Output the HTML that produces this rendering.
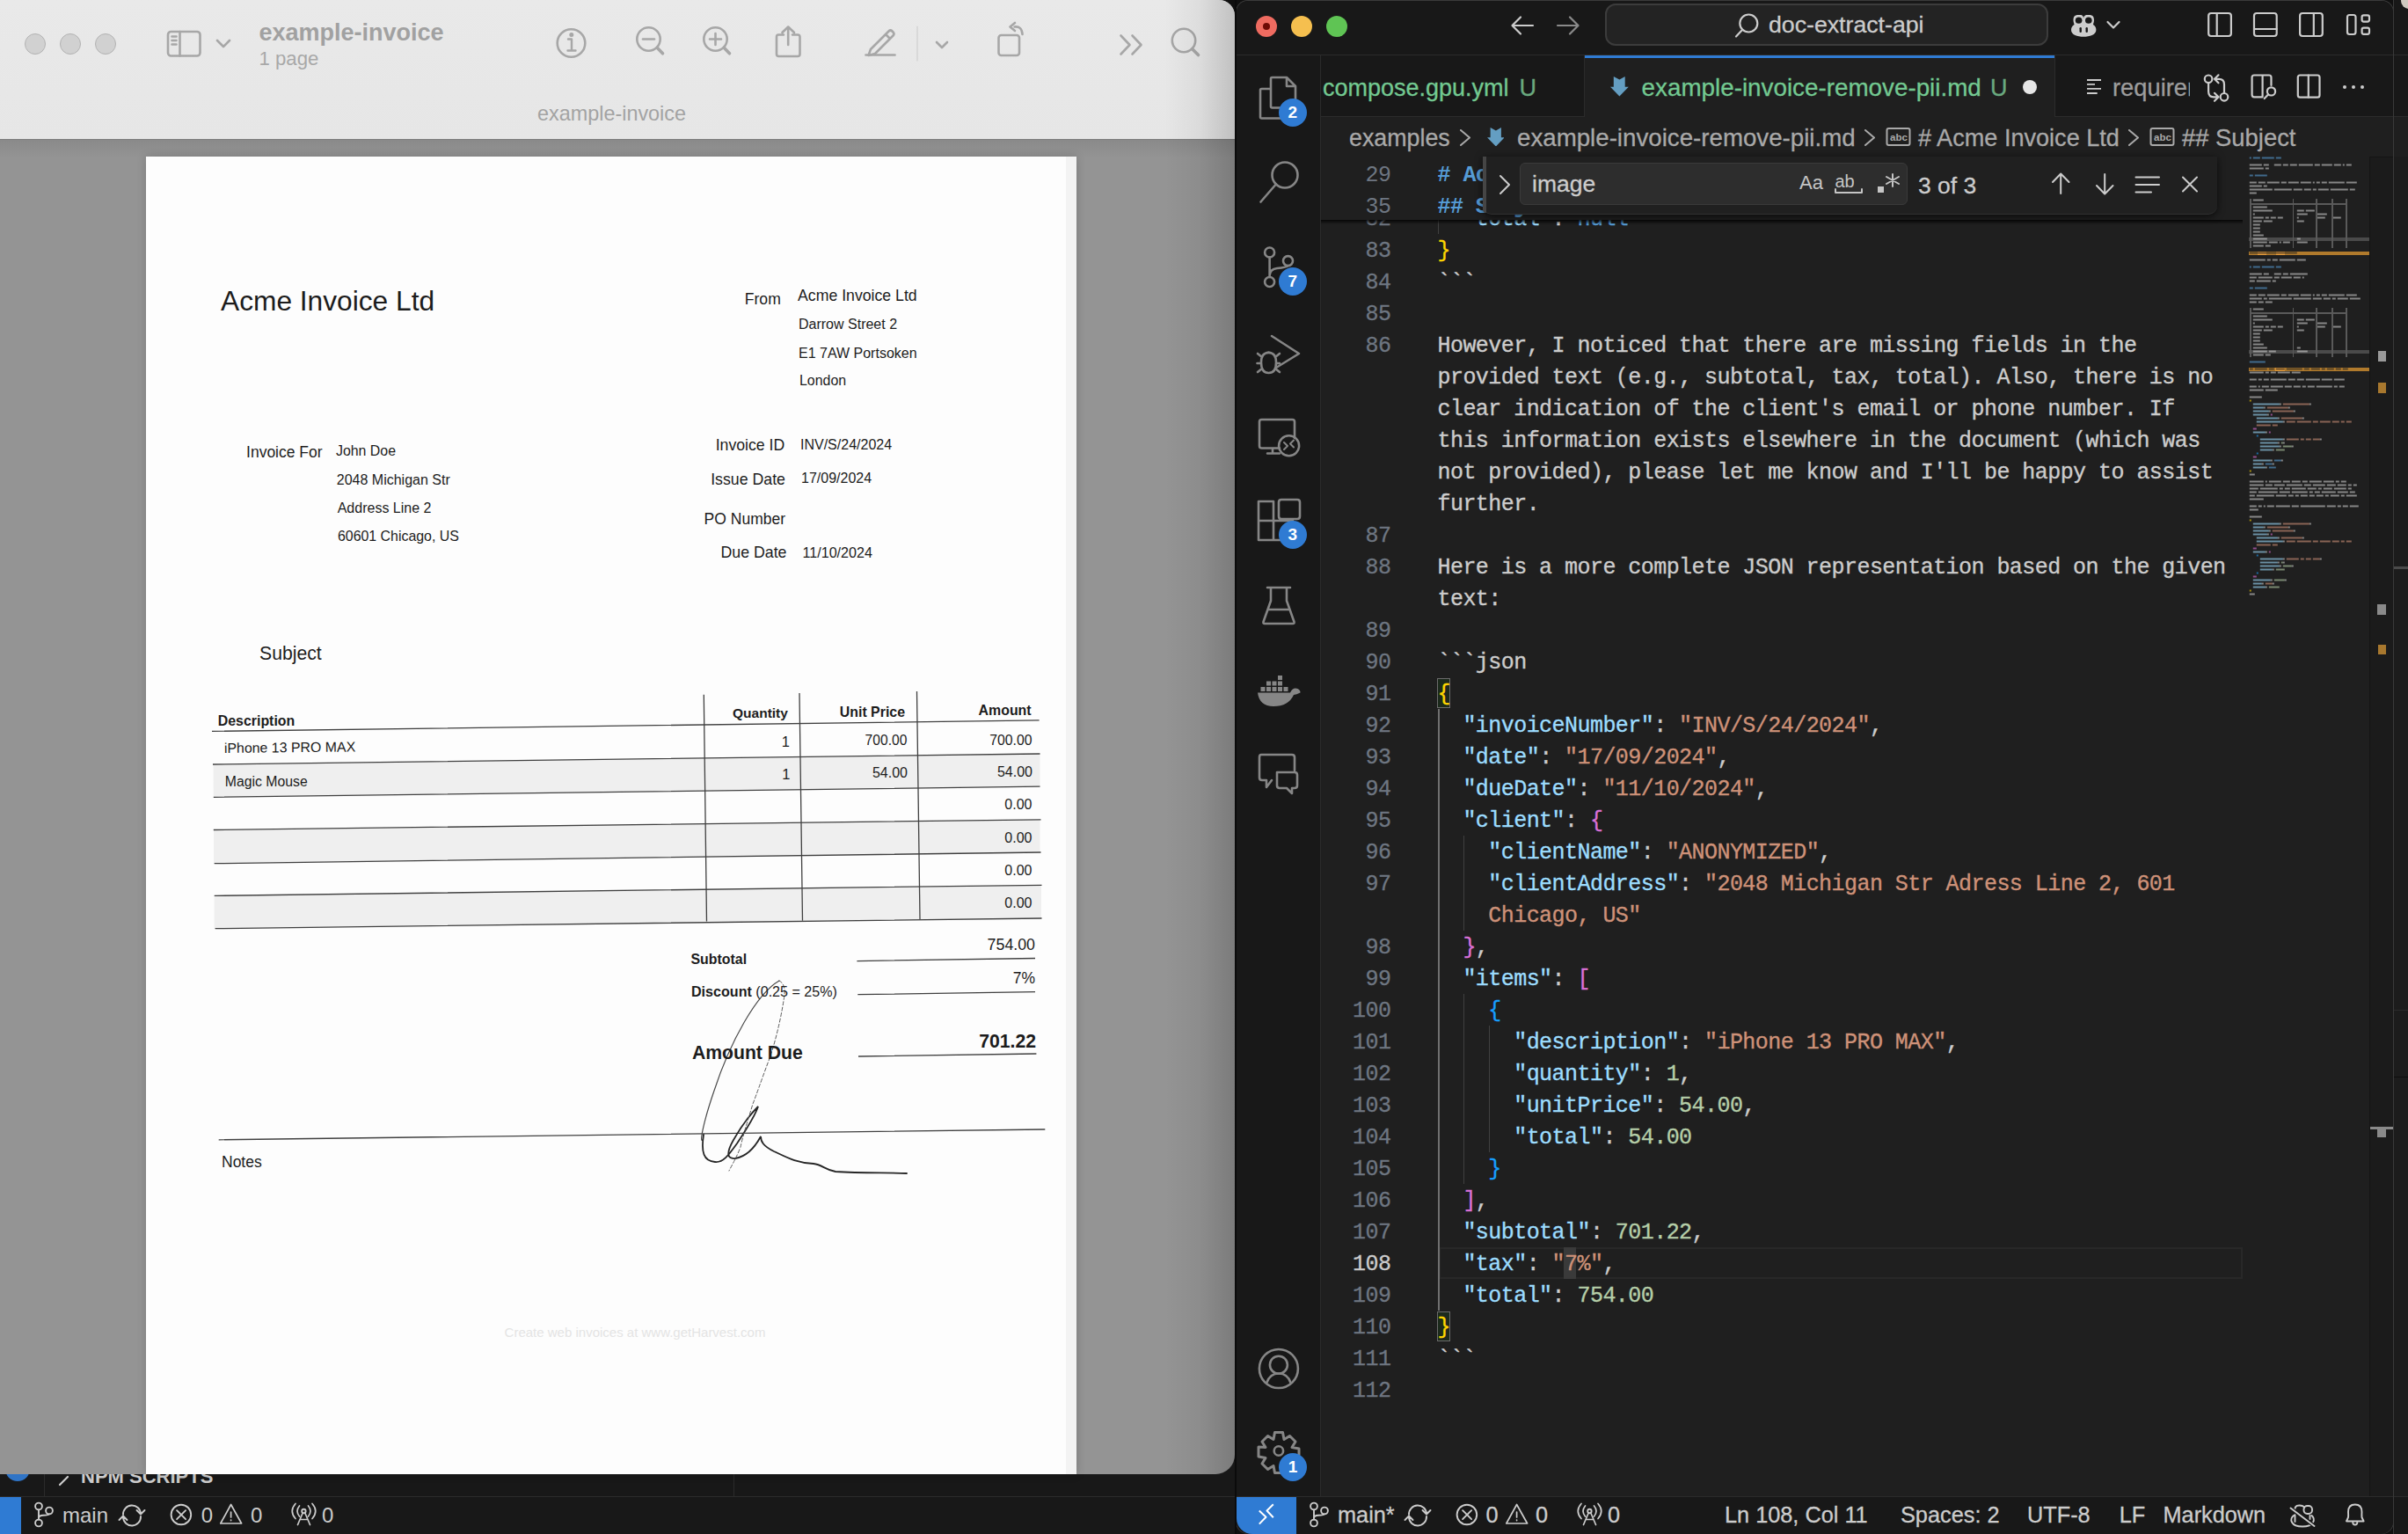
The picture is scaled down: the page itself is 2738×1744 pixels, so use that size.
<!DOCTYPE html><html><head><meta charset="utf-8"><style>html,body{margin:0;padding:0;width:2738px;height:1744px;overflow:hidden;background:#101010;position:relative}</style></head><body>
<div style="position:absolute;left:0px;top:1660px;width:1406px;height:84px;background:#181818;"></div>
<div style="position:absolute;left:0px;top:1701px;width:1406px;height:1px;background:#2b2b2b;"></div>
<div style="position:absolute;left:50px;top:1660px;width:1px;height:41px;background:#2b2b2b;"></div>
<div style="position:absolute;left:834px;top:1660px;width:1px;height:41px;background:#2b2b2b;"></div>
<div style="position:absolute;left:6px;top:1656px;width:28px;height:28px;border-radius:50%;background:#2f74c6"></div>
<div style="position:absolute;left:0px;top:1702px;width:24px;height:42px;background:#2f7bd3;"></div>
<div style="position:absolute;left:92.00px;top:1668.38px;font:700 22px/22px 'Liberation Sans', sans-serif;color:#cccccc;white-space:pre;">NPM SCRIPTS</div>
<svg style="position:absolute;left:0px;top:1660px" width="1406" height="84" viewBox="0 1660 1406 84" fill="none" stroke="#cccccc" stroke-width="1.9" stroke-linecap="round" stroke-linejoin="round"><path d="M68 1688 L77 1679" stroke-width="2.2"/><g transform="translate(-1450 0)"><circle cx="1494" cy="1712.5" r="3.9"/><circle cx="1494" cy="1731.5" r="3.9"/><circle cx="1506" cy="1717.5" r="3.9"/><path d="M1494 1716.4 V1727.6 M1494 1726 Q1494 1723 1499 1722.8 Q1505.5 1722.5 1506 1721.4"/></g><g transform="translate(-1462 0)"><path d="M1602 1722 A10 10 0 0 1 1622 1721 M1617.5 1717 L1622 1721.5 L1626.5 1717 M1622 1724 A10 10 0 0 1 1602 1725 M1597.5 1728 L1602 1723.5 L1606.5 1728"/><circle cx="1667.9" cy="1722" r="11.3"/><path d="M1663.1 1717.2 L1673.1 1727.2 M1673.1 1717.2 L1663.1 1727.2"/><path d="M1724.6 1710.5 L1736.6 1732 H1712.8 Z M1724.6 1719 V1725 M1724.6 1728 V1728.6" stroke-width="1.7"/><circle cx="1807.4" cy="1718" r="2.2"/><path d="M1806 1720.5 L1800.5 1733.5 M1809 1720.5 L1814.5 1733.5 M1803 1727.5 H1812 M1802.5 1712 Q1797.5 1718 1802.5 1724 M1812.5 1712 Q1817.5 1718 1812.5 1724 M1798 1709.5 Q1790.5 1718 1798 1726.5 M1817 1709.5 Q1824.5 1718 1817 1726.5" stroke-width="1.7"/></g></svg>
<div style="position:absolute;left:71.00px;top:1710.68px;font:400 24px/24px 'Liberation Sans', sans-serif;color:#cccccc;white-space:pre;">main</div>
<div style="position:absolute;left:228.70px;top:1710.68px;font:400 24px/24px 'Liberation Sans', sans-serif;color:#cccccc;white-space:pre;">0</div>
<div style="position:absolute;left:285.00px;top:1710.68px;font:400 24px/24px 'Liberation Sans', sans-serif;color:#cccccc;white-space:pre;">0</div>
<div style="position:absolute;left:366.00px;top:1710.68px;font:400 24px/24px 'Liberation Sans', sans-serif;color:#cccccc;white-space:pre;">0</div>
<div style="position:absolute;left:0;top:0;width:1404px;height:1676px;border-radius:0 18px 22px 0;overflow:hidden;background:#949494">
<div style="position:absolute;left:0;top:0;width:1404px;height:158px;background:linear-gradient(#e9e9e9,#e6e6e6)"></div>
<div style="position:absolute;left:0;top:158px;width:1404px;height:1px;background:#7d7d7d"></div>
<div style="position:absolute;left:0;top:159px;width:1404px;height:20px;background:linear-gradient(#8a8a8a,#949494)"></div>
</div>
<div style="position:absolute;left:28px;top:38px;width:22px;height:22px;border-radius:50%;background:#d1d1d1;border:1px solid #b3b3b3"></div>
<div style="position:absolute;left:68px;top:38px;width:22px;height:22px;border-radius:50%;background:#d1d1d1;border:1px solid #b3b3b3"></div>
<div style="position:absolute;left:108px;top:38px;width:22px;height:22px;border-radius:50%;background:#d1d1d1;border:1px solid #b3b3b3"></div>
<svg style="position:absolute;left:0;top:0" width="1404" height="158" fill="none" stroke="#a7a7a7" stroke-width="2.6" stroke-linecap="round" stroke-linejoin="round">
<rect x="191" y="36" width="36.5" height="27.5" rx="3.5"/>
<path d="M204.5 36 V63.5 M195.5 41.5 H200.5 M195.5 46 H200.5 M195.5 50.5 H200.5"/>
<path d="M247 46 L254 53 L261 46"/>
<circle cx="649.5" cy="49" r="15.8"/>
<path d="M646 44.5 H650 V57 M645.5 57.5 H654.5" stroke-width="2.4"/>
<circle cx="649.8" cy="39.5" r="1.2" fill="#a7a7a7"/>
<circle cx="737.5" cy="44.5" r="13.2"/><path d="M747.2 54.2 L753.5 60.8" stroke-width="3.6"/><path d="M731 44.5 H744"/>
<circle cx="813.5" cy="44.5" r="13.2"/><path d="M823.2 54.2 L829.5 60.8" stroke-width="3.6"/><path d="M807 44.5 H820 M813.5 38 V51"/>
<path d="M891 39.5 H885 Q883 39.5 883 42 V61.5 Q883 64 885.5 64 H907 Q909.5 64 909.5 61.5 V42 Q909.5 39.5 907 39.5 H901 M896.2 51 V31 M889.5 37 L896.2 30.5 L903 37"/>
<path d="M984.5 62.5 H1017.5"/>
<path d="M990 56 L1010.5 35.5 Q1012.5 33.5 1014.5 35.5 L1015.5 36.5 Q1017.5 38.5 1015.5 40.5 L995 61 L987.5 63 Z M1007 39 L1012 44"/>
<path d="M1043 30 V69" stroke="#cfcfcf" stroke-width="1.2"/>
<path d="M1065 48 L1071 54 L1077 48"/>
<rect x="1135.5" y="40" width="23.5" height="23" rx="3"/>
<path d="M1153.5 30.5 Q1162 29.5 1162.5 39 M1148.5 30.5 L1154 26 M1148.5 30.5 L1154 35"/>
<path d="M1274.5 40.5 L1284.5 51 L1274.5 61.5 M1287.5 40.5 L1297.5 51 L1287.5 61.5"/>
<circle cx="1346" cy="46" r="13.2"/><path d="M1355.7 55.7 L1362.5 62.5" stroke-width="3.6"/>
</svg>
<div style="position:absolute;left:294.50px;top:23.64px;font:700 27px/27px 'Liberation Sans', sans-serif;color:#a1a1a1;white-space:pre;">example-invoice</div>
<div style="position:absolute;left:294.50px;top:56.21px;font:400 22.2px/22.2px 'Liberation Sans', sans-serif;color:#a8a8a8;white-space:pre;">1 page</div>
<div style="position:absolute;left:695.50px;transform:translateX(-50%);top:118.19px;font:400 23.4px/23.4px 'Liberation Sans', sans-serif;color:#a3a3a3;white-space:pre;">example-invoice</div>
<div style="position:absolute;left:166px;top:178px;width:1058px;height:1498px;background:#fdfdfd;overflow:hidden;box-shadow:0 0 10px rgba(0,0,0,0.18)">
<div style="position:absolute;left:1046px;top:0;width:12px;height:1498px;background:#f3f3f3"></div>
</div>
<div style="position:absolute;left:251.00px;top:326.97px;font:400 31.7px/31.7px 'Liberation Sans', sans-serif;color:#1c1c1c;white-space:pre;">Acme Invoice Ltd</div>
<div style="position:absolute;right:1850.20px;top:331.70px;font:400 17.6px/17.6px 'Liberation Sans', sans-serif;color:#1c1c1c;white-space:pre;">From</div>
<div style="position:absolute;left:907.00px;top:328.42px;font:400 17.7px/17.7px 'Liberation Sans', sans-serif;color:#1c1c1c;white-space:pre;">Acme Invoice Ltd</div>
<div style="position:absolute;left:908.00px;top:361.26px;font:400 16.0px/16.0px 'Liberation Sans', sans-serif;color:#1c1c1c;white-space:pre;">Darrow Street 2</div>
<div style="position:absolute;left:908.00px;top:394.06px;font:400 16.0px/16.0px 'Liberation Sans', sans-serif;color:#1c1c1c;white-space:pre;">E1 7AW Portsoken</div>
<div style="position:absolute;left:909.00px;top:425.30px;font:400 15.95px/15.95px 'Liberation Sans', sans-serif;color:#1c1c1c;white-space:pre;">London</div>
<div style="position:absolute;right:2371.40px;top:505.79px;font:400 17.5px/17.5px 'Liberation Sans', sans-serif;color:#1c1c1c;white-space:pre;">Invoice For</div>
<div style="position:absolute;left:382.00px;top:504.94px;font:400 15.9px/15.9px 'Liberation Sans', sans-serif;color:#1c1c1c;white-space:pre;">John Doe</div>
<div style="position:absolute;left:382.80px;top:537.56px;font:400 16.0px/16.0px 'Liberation Sans', sans-serif;color:#1c1c1c;white-space:pre;">2048 Michigan Str</div>
<div style="position:absolute;left:383.70px;top:569.86px;font:400 16.0px/16.0px 'Liberation Sans', sans-serif;color:#1c1c1c;white-space:pre;">Address Line 2</div>
<div style="position:absolute;left:384.00px;top:602.24px;font:400 15.9px/15.9px 'Liberation Sans', sans-serif;color:#1c1c1c;white-space:pre;">60601 Chicago, US</div>
<div style="position:absolute;right:1845.70px;top:498.22px;font:400 17.7px/17.7px 'Liberation Sans', sans-serif;color:#1c1c1c;white-space:pre;">Invoice ID</div>
<div style="position:absolute;left:910.00px;top:497.96px;font:400 16.0px/16.0px 'Liberation Sans', sans-serif;color:#1c1c1c;white-space:pre;">INV/S/24/2024</div>
<div style="position:absolute;right:1845.00px;top:537.47px;font:400 17.75px/17.75px 'Liberation Sans', sans-serif;color:#1c1c1c;white-space:pre;">Issue Date</div>
<div style="position:absolute;left:911.00px;top:535.56px;font:400 16.0px/16.0px 'Liberation Sans', sans-serif;color:#1c1c1c;white-space:pre;">17/09/2024</div>
<div style="position:absolute;right:1845.00px;top:581.69px;font:400 17.5px/17.5px 'Liberation Sans', sans-serif;color:#1c1c1c;white-space:pre;">PO Number</div>
<div style="position:absolute;right:1843.50px;top:620.47px;font:400 17.75px/17.75px 'Liberation Sans', sans-serif;color:#1c1c1c;white-space:pre;">Due Date</div>
<div style="position:absolute;left:912.50px;top:619.87px;font:400 16.1px/16.1px 'Liberation Sans', sans-serif;color:#1c1c1c;white-space:pre;">11/10/2024</div>
<div style="position:absolute;left:295.00px;top:732.25px;font:400 21.2px/21.2px 'Liberation Sans', sans-serif;color:#1c1c1c;white-space:pre;">Subject</div>
<svg style="position:absolute;left:0;top:0" width="1404" height="1676">
<polygon points="242.5,869 1182.5,857 1182.5,894.2 242.8,906.3" fill="#efefef"/>
<polygon points="243,943.5 1182.5,931.9 1182.5,969 243,981.7" fill="#efefef"/>
<polygon points="243.7,1018.4 1184,1006.3 1184,1044 243.7,1055.7" fill="#efefef"/>
<g stroke="#404040" stroke-width="1.3" fill="none">
<path d="M241 831.4 L1181.6 818.9 M242 869 L1182.5 857 M242.8 906.3 L1182.5 894.2 M242.8 943.5 L1183.5 931.9 M243.7 981.7 L1183.5 969 M243.7 1018.4 L1184.5 1006.3 M244.6 1055.7 L1184.5 1044"/>
<path d="M800.3 789.7 L803.5 1047.6 M909 788 L912.5 1046.7 M1042.5 786 L1046 1045"/>
<path d="M974.4 1092.6 L1177 1089.5 M975.3 1130.7 L1177 1127.6 M976 1201 L1178.4 1198 M248.7 1295.8 L1188.3 1284"/>
</g>
<g fill="none" stroke-linecap="round">
<path d="M886 1115 C 860 1130, 830 1185, 812 1240 C 800 1275, 795 1300, 799 1296" stroke="#4a4a4a" stroke-width="1.2"/>
<path d="M800 1290 C 797 1310, 800 1320, 813 1321 C 822 1322, 828 1314, 838 1300 C 848 1285, 858 1270, 862 1258 C 858 1262, 846 1275, 834 1296 C 826 1310, 826 1318, 836 1317 C 848 1315, 858 1305, 865 1292 C 865 1298, 868 1303, 880 1309 C 895 1316, 905 1322, 925 1323 C 935 1324, 938 1330, 950 1332 C 980 1334, 1010 1333, 1031 1334" stroke="#262626" stroke-width="1.8"/>
<path d="M886 1115 C 890 1117, 893 1122, 892 1131 C 888 1160, 880 1190, 874 1206 C 865 1230, 860 1245, 856 1255 C 850 1275, 845 1290, 842 1304 C 838 1315, 832 1325, 829 1331" stroke="#5a5a5a" stroke-width="1" stroke-dasharray="4 2.5"/>
</g>
</svg>
<div style="position:absolute;left:247.80px;top:811.64px;font:700 15.9px/15.9px 'Liberation Sans', sans-serif;color:#1c1c1c;white-space:pre;">Description</div>
<div style="position:absolute;right:1842.10px;top:803.08px;font:700 15.5px/15.5px 'Liberation Sans', sans-serif;color:#1c1c1c;white-space:pre;">Quantity</div>
<div style="position:absolute;right:1709.00px;top:802.34px;font:700 15.9px/15.9px 'Liberation Sans', sans-serif;color:#1c1c1c;white-space:pre;">Unit Price</div>
<div style="position:absolute;right:1565.40px;top:800.34px;font:700 15.9px/15.9px 'Liberation Sans', sans-serif;color:#1c1c1c;white-space:pre;">Amount</div>
<div style="position:absolute;left:254.50px;top:843.04px;font:400 15.9px/15.9px 'Liberation Sans', sans-serif;color:#1c1c1c;white-space:pre;transform:rotate(-0.6deg);transform-origin:0 100%">iPhone 13 PRO MAX</div>
<div style="position:absolute;right:1840.00px;top:834.83px;font:400 16.5px/16.5px 'Liberation Sans', sans-serif;color:#1c1c1c;white-space:pre;">1</div>
<div style="position:absolute;right:1706.70px;top:834.39px;font:400 15.6px/15.6px 'Liberation Sans', sans-serif;color:#1c1c1c;white-space:pre;">700.00</div>
<div style="position:absolute;right:1564.50px;top:834.23px;font:400 15.8px/15.8px 'Liberation Sans', sans-serif;color:#1c1c1c;white-space:pre;">700.00</div>
<div style="position:absolute;left:255.80px;top:881.33px;font:400 15.8px/15.8px 'Liberation Sans', sans-serif;color:#1c1c1c;white-space:pre;">Magic Mouse</div>
<div style="position:absolute;right:1839.50px;top:871.83px;font:400 16.5px/16.5px 'Liberation Sans', sans-serif;color:#1c1c1c;white-space:pre;">1</div>
<div style="position:absolute;right:1706.00px;top:871.26px;font:400 16.0px/16.0px 'Liberation Sans', sans-serif;color:#1c1c1c;white-space:pre;">54.00</div>
<div style="position:absolute;right:1564.00px;top:869.86px;font:400 16.0px/16.0px 'Liberation Sans', sans-serif;color:#1c1c1c;white-space:pre;">54.00</div>
<div style="position:absolute;right:1564.50px;top:907.16px;font:400 16.0px/16.0px 'Liberation Sans', sans-serif;color:#1c1c1c;white-space:pre;">0.00</div>
<div style="position:absolute;right:1564.50px;top:944.76px;font:400 16.0px/16.0px 'Liberation Sans', sans-serif;color:#1c1c1c;white-space:pre;">0.00</div>
<div style="position:absolute;right:1564.50px;top:982.06px;font:400 16.0px/16.0px 'Liberation Sans', sans-serif;color:#1c1c1c;white-space:pre;">0.00</div>
<div style="position:absolute;right:1564.50px;top:1019.26px;font:400 16.0px/16.0px 'Liberation Sans', sans-serif;color:#1c1c1c;white-space:pre;">0.00</div>
<div style="position:absolute;right:1561.00px;top:1065.73px;font:400 17.8px/17.8px 'Liberation Sans', sans-serif;color:#1c1c1c;white-space:pre;">754.00</div>
<div style="position:absolute;left:785.50px;top:1083.24px;font:700 15.9px/15.9px 'Liberation Sans', sans-serif;color:#1c1c1c;white-space:pre;">Subtotal</div>
<div style="position:absolute;right:1561.00px;top:1104.29px;font:400 17.5px/17.5px 'Liberation Sans', sans-serif;color:#1c1c1c;white-space:pre;">7%</div>
<div style="position:absolute;left:786.00px;top:1118.87px;font:400 16.1px/16.1px 'Liberation Sans', sans-serif;color:#1c1c1c;white-space:pre;"><b>Discount</b> (0.25 = 25%)</div>
<div style="position:absolute;right:1560.00px;top:1172.85px;font:700 21.2px/21.2px 'Liberation Sans', sans-serif;color:#1c1c1c;white-space:pre;">701.22</div>
<div style="position:absolute;left:786.90px;top:1186.35px;font:700 21.2px/21.2px 'Liberation Sans', sans-serif;color:#1c1c1c;white-space:pre;">Amount Due</div>
<div style="position:absolute;left:252.00px;top:1312.79px;font:400 17.5px/17.5px 'Liberation Sans', sans-serif;color:#1c1c1c;white-space:pre;">Notes</div>
<div style="position:absolute;left:722.00px;transform:translateX(-50%);top:1507.10px;font:400 15px/15px 'Liberation Sans', sans-serif;color:#e4e4e4;white-space:pre;">Create web invoices at www.getHarvest.com</div>
<div style="position:absolute;left:1324px;top:0;width:80px;height:1676px;background:linear-gradient(90deg,rgba(0,0,0,0),rgba(0,0,0,0.05) 50%,rgba(0,0,0,0.17));border-radius:0 18px 22px 0"></div>
<div style="position:absolute;left:2721px;top:0px;width:17px;height:1744px;background:#181818;"></div>
<div style="position:absolute;left:2722px;top:133px;width:16px;height:45px;background:#1f1f1f;"></div>
<div style="position:absolute;left:2722px;top:178px;width:16px;height:1523px;background:#1c1c1c;"></div>
<div style="position:absolute;left:2721px;top:62px;width:17px;height:1px;background:#2b2b2b;"></div>
<div style="position:absolute;left:2721px;top:132px;width:17px;height:1px;background:#2b2b2b;"></div>
<div style="position:absolute;left:2721px;top:1701px;width:17px;height:1px;background:#2b2b2b;"></div>
<div style="position:absolute;left:2730px;top:-8px;width:18px;height:18px;border-radius:50%;background:#cfc9bf"></div>
<div style="position:absolute;left:2721px;top:644px;width:17px;height:3px;background:#4a4a4a;"></div>
<div style="position:absolute;left:2721px;top:1148px;width:17px;height:1px;background:#2a2a2a;"></div>
<div style="position:absolute;left:2721px;top:1224px;width:17px;height:1px;background:#0e0e0e;"></div>
<div style="position:absolute;left:1405px;top:0;width:1317px;height:1744px;border-radius:14px 14px 14px 14px;background:#1f1f1f;overflow:hidden;box-shadow:0 0 0 1px #3a3a3a inset">
</div>
<div style="position:absolute;left:1404px;top:0px;width:2px;height:1744px;background:#0b0b0b;"></div>
<div style="position:absolute;left:1406px;top:1px;width:1315px;height:61px;background:#181818;border-radius:13px 13px 0 0"></div>
<div style="position:absolute;left:1406px;top:62px;width:1315px;height:1px;background:#2b2b2b;"></div>
<div style="position:absolute;left:1406px;top:63px;width:95px;height:1638px;background:#181818;"></div>
<div style="position:absolute;left:1501px;top:63px;width:1px;height:1638px;background:#2b2b2b;"></div>
<div style="position:absolute;left:1502px;top:63px;width:1219px;height:70px;background:#181818;"></div>
<div style="position:absolute;left:1502px;top:132px;width:1219px;height:1px;background:#2b2b2b;"></div>
<div style="position:absolute;left:1801px;top:63px;width:1px;height:70px;background:#2b2b2b;"></div>
<div style="position:absolute;left:1802px;top:63px;width:534px;height:70px;background:#1f1f1f;"></div>
<div style="position:absolute;left:1802px;top:63px;width:534px;height:3px;background:#2f7bd3;"></div>
<div style="position:absolute;left:2336px;top:63px;width:1px;height:70px;background:#2b2b2b;"></div>
<div style="position:absolute;left:1406px;top:1701px;width:1315px;height:1px;background:#2b2b2b;"></div>
<div style="position:absolute;left:1406px;top:1702px;width:1315px;height:42px;background:#181818;border-radius:0 0 14px 14px"></div>
<div style="position:absolute;left:1406px;top:1702px;width:68px;height:42px;background:#2f7bd3;border-radius:0 0 0 18px"></div>
<div style="position:absolute;left:2721px;top:1702px;width:1px;height:42px;background:#3a3a3a;"></div>
<div style="position:absolute;left:2721px;top:0px;width:1px;height:1744px;background:#3a3a3a;"></div>
<div style="position:absolute;left:1428px;top:18px;width:24px;height:24px;border-radius:50%;background:#ee6b60"></div>
<div style="position:absolute;left:1468px;top:18px;width:24px;height:24px;border-radius:50%;background:#f5bf4f"></div>
<div style="position:absolute;left:1508px;top:18px;width:24px;height:24px;border-radius:50%;background:#5fc454"></div>
<div style="position:absolute;left:1436px;top:26px;width:8px;height:8px;border-radius:50%;background:#6e0b05"></div>
<div style="position:absolute;left:1825px;top:4px;width:500px;height:44px;border:2px solid #3c3c3c;border-radius:12px;background:#232323"></div>
<div style="position:absolute;left:2011.00px;top:14.60px;font:400 26.7px/26.7px 'Liberation Sans', sans-serif;color:#cccccc;white-space:pre;-webkit-text-stroke:0.3px currentColor;">doc-extract-api</div>
<svg style="position:absolute;left:1406px;top:0" width="1315" height="133" viewBox="1406 0 1315 133" fill="none" stroke="#cccccc" stroke-width="2.2" stroke-linecap="round" stroke-linejoin="round">
<path d="M1743 29 H1720 M1729 19.5 L1719.5 29 L1729 38.5"/>
<path d="M1771 29 H1794 M1785 19.5 L1794.5 29 L1785 38.5" stroke="#8a8a8a"/>
<circle cx="1988.3" cy="26.5" r="10"/><path d="M1981 34 L1974 41.5"/>
<rect x="2511.2" y="15" width="25.7" height="26" rx="3"/><path d="M2520.7 15 V41"/>
<rect x="2563" y="15" width="25.7" height="26" rx="3"/><path d="M2563 33 H2588.7"/>
<rect x="2615.1" y="15" width="25.7" height="26" rx="3"/><path d="M2630.8 15 V41"/>
<rect x="2669" y="17" width="9.5" height="22" rx="2.5"/><rect x="2685.6" y="17.4" width="8.4" height="7.2" rx="2"/><rect x="2685.6" y="31.6" width="8.4" height="7.2" rx="2"/>
<path d="M2396.5 25 L2403 31.5 L2409.5 25"/>
<g fill="#cccccc" stroke="none">
<path d="M2369 21 C2369 16.5 2366 17 2363 17 C2359 17 2357.5 19 2357.5 23 C2357.5 25.5 2358.5 26.5 2358.5 28 C2356 29.5 2355 31.5 2355 34 C2355 39.5 2362 41.8 2369 41.8 C2376 41.8 2383.4 39.5 2383.4 34 C2383.4 31.5 2382.5 29.5 2380 28 C2380 26.5 2381 25.5 2381 23 C2381 19 2379.5 17 2375.5 17 C2372.5 17 2369.5 16.5 2369 21 Z"/>
</g>
<g fill="#181818" stroke="none">
<ellipse cx="2363.6" cy="23.2" rx="3.8" ry="3.6"/><ellipse cx="2374.8" cy="23.2" rx="3.8" ry="3.6"/>
<rect x="2364.5" y="31" width="2.4" height="6" rx="1.2"/><rect x="2371.5" y="31" width="2.4" height="6" rx="1.2"/>
</g>
</svg>
<div style="position:absolute;left:1504.00px;top:87.14px;font:400 27.0px/27.0px 'Liberation Sans', sans-serif;color:#73c991;white-space:pre;-webkit-text-stroke:0.3px currentColor;">compose.gpu.yml</div>
<div style="position:absolute;left:1727.60px;top:87.14px;font:400 27px/27px 'Liberation Sans', sans-serif;color:#6aa97f;white-space:pre;-webkit-text-stroke:0.3px currentColor;">U</div>
<div style="position:absolute;left:1866.60px;top:86.47px;font:400 27.8px/27.8px 'Liberation Sans', sans-serif;color:#73c991;white-space:pre;-webkit-text-stroke:0.3px currentColor;">example-invoice-remove-pii.md</div>
<div style="position:absolute;left:2263.00px;top:87.14px;font:400 27px/27px 'Liberation Sans', sans-serif;color:#6aa97f;white-space:pre;-webkit-text-stroke:0.3px currentColor;">U</div>
<div style="position:absolute;left:2300px;top:91px;width:16px;height:16px;border-radius:50%;background:#e6e6e6"></div>
<div style="position:absolute;left:2337px;top:63px;width:160px;height:69px;overflow:hidden">
<div style="position:absolute;left:65.00px;top:22.89px;font:400 27.3px/27.3px 'Liberation Sans', sans-serif;color:#9d9d9d;white-space:pre;-webkit-text-stroke:0.3px currentColor;">requirements.txt</div>
</div>
<div style="position:absolute;left:2490px;top:63px;width:231px;height:69px;background:#181818"></div>
<svg style="position:absolute;left:1406px;top:0" width="1315" height="180" viewBox="1406 0 1315 180" fill="none" stroke="#cccccc" stroke-width="2.2" stroke-linecap="round" stroke-linejoin="round">
<path d="M2373 91 H2389 M2373 95.8 H2382 M2373 100.8 H2389 M2373 106 H2384.7" stroke-width="1.8" stroke-linecap="butt"/>
<circle cx="2511.1" cy="89.8" r="4.3"/><circle cx="2529" cy="110.3" r="4.3"/>
<path d="M2511.1 94.3 V104 Q2511.1 110.3 2517 110.3 H2522 M2518 105.8 L2522.5 110.3 L2518 114.8"/>
<path d="M2529 105.8 V96 Q2529 89.8 2523 89.8 H2518.5 M2522.5 85.3 L2518 89.8 L2522.5 94.3"/>
<path d="M2582.5 97 V88 Q2582.5 85.5 2580 85.5 H2563 Q2560.6 85.5 2560.6 88 V107.8 Q2560.6 110.3 2563 110.3 H2572.6 M2572.6 85.5 V110.3"/>
<circle cx="2582.5" cy="103.9" r="4.6"/><path d="M2579.2 107.2 L2574.7 112"/>
<rect x="2612.8" y="85.5" width="24.7" height="25.2" rx="2.5"/><path d="M2624.8 85.5 V110.7"/>
</svg>
<div style="position:absolute;left:2663.5px;top:96.7px;width:4.6px;height:4.6px;border-radius:50%;background:#cccccc"></div>
<div style="position:absolute;left:2673.7px;top:96.7px;width:4.6px;height:4.6px;border-radius:50%;background:#cccccc"></div>
<div style="position:absolute;left:2683.8999999999996px;top:96.7px;width:4.6px;height:4.6px;border-radius:50%;background:#cccccc"></div>
<svg style="position:absolute;left:1831.2px;top:87.2px" width="20.8" height="22.6" viewBox="0 0 20.8 22.6"><path d="M3.8 0 L10.4 3.6 L16.7 0 V11.8 H20.8 L10.4 22.6 L0 11.8 H3.8 Z" fill="#649ec2"/></svg>
<svg style="position:absolute;left:1690.7px;top:144.5px" width="19.8" height="21.5" viewBox="0 0 20.8 22.6"><path d="M3.8 0 L10.4 3.6 L16.7 0 V11.8 H20.8 L10.4 22.6 L0 11.8 H3.8 Z" fill="#649ec2"/></svg>
<div style="position:absolute;left:1534.00px;top:143.61px;font:400 26.8px/26.8px 'Liberation Sans', sans-serif;color:#a9a9a9;white-space:pre;-webkit-text-stroke:0.3px currentColor;">examples</div>
<div style="position:absolute;left:1725.00px;top:142.85px;font:400 27.7px/27.7px 'Liberation Sans', sans-serif;color:#a9a9a9;white-space:pre;-webkit-text-stroke:0.3px currentColor;">example-invoice-remove-pii.md</div>
<div style="position:absolute;left:2181.00px;top:143.36px;font:400 27.1px/27.1px 'Liberation Sans', sans-serif;color:#a9a9a9;white-space:pre;-webkit-text-stroke:0.3px currentColor;"># Acme Invoice Ltd</div>
<div style="position:absolute;left:2481.00px;top:143.11px;font:400 27.4px/27.4px 'Liberation Sans', sans-serif;color:#a9a9a9;white-space:pre;-webkit-text-stroke:0.3px currentColor;">## Subject</div>
<svg style="position:absolute;left:1406px;top:133px" width="1315" height="44" viewBox="1406 133 1315 44" fill="none" stroke="#a9a9a9" stroke-width="2" stroke-linecap="round" stroke-linejoin="round">
<path d="M1661 148 L1671 156.5 L1661 165 M2121 148 L2131 156.5 L2121 165 M2421 148 L2431 156.5 L2421 165"/>
<rect x="2145.5" y="146" width="26" height="19" rx="2"/><rect x="2445.5" y="146" width="26" height="19" rx="2"/>
</svg>
<div style="position:absolute;left:2149.00px;top:150.77px;font:700 11.5px/11.5px 'Liberation Sans', sans-serif;color:#a9a9a9;white-space:pre;">abc</div>
<div style="position:absolute;left:2449.00px;top:150.77px;font:700 11.5px/11.5px 'Liberation Sans', sans-serif;color:#a9a9a9;white-space:pre;">abc</div>
<div style="position:absolute;left:1502px;top:178px;width:1219px;height:1523px;background:#1f1f1f;"></div>
<div style="position:absolute;left:2694px;top:178px;width:27px;height:1523px;background:#1b1b1b;"></div>
<div style="position:absolute;left:2694px;top:178px;width:1px;height:1523px;background:#141414;"></div>
<div style="position:absolute;left:2694px;top:178px;width:27px;height:1px;background:#141414;"></div>
<div style="position:absolute;left:1636px;top:1418px;width:910px;height:32px;border:2px solid #282828"></div>
<div style="position:absolute;left:1778px;top:1418px;width:14px;height:36px;background:#3a3a3a;"></div>
<div style="position:absolute;left:1634.5px;top:806.0px;width:2px;height:684px;background:#6f6f6f;"></div>
<div style="position:absolute;left:1663.6px;top:950.0px;width:1.5px;height:108px;background:#404040;"></div>
<div style="position:absolute;left:1663.6px;top:1130.0px;width:1.5px;height:216px;background:#404040;"></div>
<div style="position:absolute;left:1692.5px;top:1166.0px;width:1.5px;height:144px;background:#404040;"></div>
<div style="position:absolute;left:1634.5px;top:230.0px;width:1.5px;height:36px;background:#404040;"></div>
<div style="position:absolute;left:1634px;top:771.0px;width:13px;height:32px;border:1.5px solid #6b6b6b;background:#1c2a1c"></div>
<div style="position:absolute;left:1634px;top:1491.0px;width:13px;height:32px;border:1.5px solid #6b6b6b;background:#1c2a1c"></div>
<div style="position:absolute;left:1634.5px;top:237.04px;font:400 25px/25px 'Liberation Mono', monospace;letter-spacing:-0.550px;white-space:pre;-webkit-text-stroke:0.35px currentColor"><span style="color:#cccccc">  </span><span style="color:#9cdcfe">"total"</span><span style="color:#cccccc">: </span><span style="color:#569cd6">null</span></div>
<div style="position:absolute;right:1156.55px;top:237.04px;font:400 25px/25px 'Liberation Mono', monospace;letter-spacing:-0.550px;color:#6e7681;white-space:pre;-webkit-text-stroke:0.3px currentColor">82</div>
<div style="position:absolute;left:1634.5px;top:273.04px;font:400 25px/25px 'Liberation Mono', monospace;letter-spacing:-0.550px;white-space:pre;-webkit-text-stroke:0.35px currentColor"><span style="color:#ffd700">}</span></div>
<div style="position:absolute;right:1156.55px;top:273.04px;font:400 25px/25px 'Liberation Mono', monospace;letter-spacing:-0.550px;color:#6e7681;white-space:pre;-webkit-text-stroke:0.3px currentColor">83</div>
<div style="position:absolute;left:1634.5px;top:309.04px;font:400 25px/25px 'Liberation Mono', monospace;letter-spacing:-0.550px;white-space:pre;-webkit-text-stroke:0.35px currentColor"><span style="color:#cccccc">```</span></div>
<div style="position:absolute;right:1156.55px;top:309.04px;font:400 25px/25px 'Liberation Mono', monospace;letter-spacing:-0.550px;color:#6e7681;white-space:pre;-webkit-text-stroke:0.3px currentColor">84</div>
<div style="position:absolute;right:1156.55px;top:345.04px;font:400 25px/25px 'Liberation Mono', monospace;letter-spacing:-0.550px;color:#6e7681;white-space:pre;-webkit-text-stroke:0.3px currentColor">85</div>
<div style="position:absolute;left:1634.5px;top:381.04px;font:400 25px/25px 'Liberation Mono', monospace;letter-spacing:-0.550px;white-space:pre;-webkit-text-stroke:0.35px currentColor"><span style="color:#cccccc">However, I noticed that there are missing fields in the</span></div>
<div style="position:absolute;right:1156.55px;top:381.04px;font:400 25px/25px 'Liberation Mono', monospace;letter-spacing:-0.550px;color:#6e7681;white-space:pre;-webkit-text-stroke:0.3px currentColor">86</div>
<div style="position:absolute;left:1634.5px;top:417.04px;font:400 25px/25px 'Liberation Mono', monospace;letter-spacing:-0.550px;white-space:pre;-webkit-text-stroke:0.35px currentColor"><span style="color:#cccccc">provided text (e.g., subtotal, tax, total). Also, there is no</span></div>
<div style="position:absolute;left:1634.5px;top:453.04px;font:400 25px/25px 'Liberation Mono', monospace;letter-spacing:-0.550px;white-space:pre;-webkit-text-stroke:0.35px currentColor"><span style="color:#cccccc">clear indication of the client's email or phone number. If</span></div>
<div style="position:absolute;left:1634.5px;top:489.04px;font:400 25px/25px 'Liberation Mono', monospace;letter-spacing:-0.550px;white-space:pre;-webkit-text-stroke:0.35px currentColor"><span style="color:#cccccc">this information exists elsewhere in the document (which was</span></div>
<div style="position:absolute;left:1634.5px;top:525.04px;font:400 25px/25px 'Liberation Mono', monospace;letter-spacing:-0.550px;white-space:pre;-webkit-text-stroke:0.35px currentColor"><span style="color:#cccccc">not provided), please let me know and I'll be happy to assist</span></div>
<div style="position:absolute;left:1634.5px;top:561.04px;font:400 25px/25px 'Liberation Mono', monospace;letter-spacing:-0.550px;white-space:pre;-webkit-text-stroke:0.35px currentColor"><span style="color:#cccccc">further.</span></div>
<div style="position:absolute;right:1156.55px;top:597.04px;font:400 25px/25px 'Liberation Mono', monospace;letter-spacing:-0.550px;color:#6e7681;white-space:pre;-webkit-text-stroke:0.3px currentColor">87</div>
<div style="position:absolute;left:1634.5px;top:633.04px;font:400 25px/25px 'Liberation Mono', monospace;letter-spacing:-0.550px;white-space:pre;-webkit-text-stroke:0.35px currentColor"><span style="color:#cccccc">Here is a more complete JSON representation based on the given</span></div>
<div style="position:absolute;right:1156.55px;top:633.04px;font:400 25px/25px 'Liberation Mono', monospace;letter-spacing:-0.550px;color:#6e7681;white-space:pre;-webkit-text-stroke:0.3px currentColor">88</div>
<div style="position:absolute;left:1634.5px;top:669.04px;font:400 25px/25px 'Liberation Mono', monospace;letter-spacing:-0.550px;white-space:pre;-webkit-text-stroke:0.35px currentColor"><span style="color:#cccccc">text:</span></div>
<div style="position:absolute;right:1156.55px;top:705.04px;font:400 25px/25px 'Liberation Mono', monospace;letter-spacing:-0.550px;color:#6e7681;white-space:pre;-webkit-text-stroke:0.3px currentColor">89</div>
<div style="position:absolute;left:1634.5px;top:741.04px;font:400 25px/25px 'Liberation Mono', monospace;letter-spacing:-0.550px;white-space:pre;-webkit-text-stroke:0.35px currentColor"><span style="color:#cccccc">```json</span></div>
<div style="position:absolute;right:1156.55px;top:741.04px;font:400 25px/25px 'Liberation Mono', monospace;letter-spacing:-0.550px;color:#6e7681;white-space:pre;-webkit-text-stroke:0.3px currentColor">90</div>
<div style="position:absolute;left:1634.5px;top:777.04px;font:400 25px/25px 'Liberation Mono', monospace;letter-spacing:-0.550px;white-space:pre;-webkit-text-stroke:0.35px currentColor"><span style="color:#ffd700">{</span></div>
<div style="position:absolute;right:1156.55px;top:777.04px;font:400 25px/25px 'Liberation Mono', monospace;letter-spacing:-0.550px;color:#6e7681;white-space:pre;-webkit-text-stroke:0.3px currentColor">91</div>
<div style="position:absolute;left:1634.5px;top:813.04px;font:400 25px/25px 'Liberation Mono', monospace;letter-spacing:-0.550px;white-space:pre;-webkit-text-stroke:0.35px currentColor"><span style="color:#cccccc">  </span><span style="color:#9cdcfe">"invoiceNumber"</span><span style="color:#cccccc">: </span><span style="color:#ce9178">"INV/S/24/2024"</span><span style="color:#cccccc">,</span></div>
<div style="position:absolute;right:1156.55px;top:813.04px;font:400 25px/25px 'Liberation Mono', monospace;letter-spacing:-0.550px;color:#6e7681;white-space:pre;-webkit-text-stroke:0.3px currentColor">92</div>
<div style="position:absolute;left:1634.5px;top:849.04px;font:400 25px/25px 'Liberation Mono', monospace;letter-spacing:-0.550px;white-space:pre;-webkit-text-stroke:0.35px currentColor"><span style="color:#cccccc">  </span><span style="color:#9cdcfe">"date"</span><span style="color:#cccccc">: </span><span style="color:#ce9178">"17/09/2024"</span><span style="color:#cccccc">,</span></div>
<div style="position:absolute;right:1156.55px;top:849.04px;font:400 25px/25px 'Liberation Mono', monospace;letter-spacing:-0.550px;color:#6e7681;white-space:pre;-webkit-text-stroke:0.3px currentColor">93</div>
<div style="position:absolute;left:1634.5px;top:885.04px;font:400 25px/25px 'Liberation Mono', monospace;letter-spacing:-0.550px;white-space:pre;-webkit-text-stroke:0.35px currentColor"><span style="color:#cccccc">  </span><span style="color:#9cdcfe">"dueDate"</span><span style="color:#cccccc">: </span><span style="color:#ce9178">"11/10/2024"</span><span style="color:#cccccc">,</span></div>
<div style="position:absolute;right:1156.55px;top:885.04px;font:400 25px/25px 'Liberation Mono', monospace;letter-spacing:-0.550px;color:#6e7681;white-space:pre;-webkit-text-stroke:0.3px currentColor">94</div>
<div style="position:absolute;left:1634.5px;top:921.04px;font:400 25px/25px 'Liberation Mono', monospace;letter-spacing:-0.550px;white-space:pre;-webkit-text-stroke:0.35px currentColor"><span style="color:#cccccc">  </span><span style="color:#9cdcfe">"client"</span><span style="color:#cccccc">: </span><span style="color:#da70d6">{</span></div>
<div style="position:absolute;right:1156.55px;top:921.04px;font:400 25px/25px 'Liberation Mono', monospace;letter-spacing:-0.550px;color:#6e7681;white-space:pre;-webkit-text-stroke:0.3px currentColor">95</div>
<div style="position:absolute;left:1634.5px;top:957.04px;font:400 25px/25px 'Liberation Mono', monospace;letter-spacing:-0.550px;white-space:pre;-webkit-text-stroke:0.35px currentColor"><span style="color:#cccccc">    </span><span style="color:#9cdcfe">"clientName"</span><span style="color:#cccccc">: </span><span style="color:#ce9178">"ANONYMIZED"</span><span style="color:#cccccc">,</span></div>
<div style="position:absolute;right:1156.55px;top:957.04px;font:400 25px/25px 'Liberation Mono', monospace;letter-spacing:-0.550px;color:#6e7681;white-space:pre;-webkit-text-stroke:0.3px currentColor">96</div>
<div style="position:absolute;left:1634.5px;top:993.04px;font:400 25px/25px 'Liberation Mono', monospace;letter-spacing:-0.550px;white-space:pre;-webkit-text-stroke:0.35px currentColor"><span style="color:#cccccc">    </span><span style="color:#9cdcfe">"clientAddress"</span><span style="color:#cccccc">: </span><span style="color:#ce9178">"2048 Michigan Str Adress Line 2, 601</span></div>
<div style="position:absolute;right:1156.55px;top:993.04px;font:400 25px/25px 'Liberation Mono', monospace;letter-spacing:-0.550px;color:#6e7681;white-space:pre;-webkit-text-stroke:0.3px currentColor">97</div>
<div style="position:absolute;left:1634.5px;top:1029.04px;font:400 25px/25px 'Liberation Mono', monospace;letter-spacing:-0.550px;white-space:pre;-webkit-text-stroke:0.35px currentColor"><span style="color:#cccccc">    </span><span style="color:#ce9178">Chicago, US"</span></div>
<div style="position:absolute;left:1634.5px;top:1065.04px;font:400 25px/25px 'Liberation Mono', monospace;letter-spacing:-0.550px;white-space:pre;-webkit-text-stroke:0.35px currentColor"><span style="color:#cccccc">  </span><span style="color:#da70d6">}</span><span style="color:#cccccc">,</span></div>
<div style="position:absolute;right:1156.55px;top:1065.04px;font:400 25px/25px 'Liberation Mono', monospace;letter-spacing:-0.550px;color:#6e7681;white-space:pre;-webkit-text-stroke:0.3px currentColor">98</div>
<div style="position:absolute;left:1634.5px;top:1101.04px;font:400 25px/25px 'Liberation Mono', monospace;letter-spacing:-0.550px;white-space:pre;-webkit-text-stroke:0.35px currentColor"><span style="color:#cccccc">  </span><span style="color:#9cdcfe">"items"</span><span style="color:#cccccc">: </span><span style="color:#da70d6">[</span></div>
<div style="position:absolute;right:1156.55px;top:1101.04px;font:400 25px/25px 'Liberation Mono', monospace;letter-spacing:-0.550px;color:#6e7681;white-space:pre;-webkit-text-stroke:0.3px currentColor">99</div>
<div style="position:absolute;left:1634.5px;top:1137.04px;font:400 25px/25px 'Liberation Mono', monospace;letter-spacing:-0.550px;white-space:pre;-webkit-text-stroke:0.35px currentColor"><span style="color:#cccccc">    </span><span style="color:#179fff">{</span></div>
<div style="position:absolute;right:1156.55px;top:1137.04px;font:400 25px/25px 'Liberation Mono', monospace;letter-spacing:-0.550px;color:#6e7681;white-space:pre;-webkit-text-stroke:0.3px currentColor">100</div>
<div style="position:absolute;left:1634.5px;top:1173.04px;font:400 25px/25px 'Liberation Mono', monospace;letter-spacing:-0.550px;white-space:pre;-webkit-text-stroke:0.35px currentColor"><span style="color:#cccccc">      </span><span style="color:#9cdcfe">"description"</span><span style="color:#cccccc">: </span><span style="color:#ce9178">"iPhone 13 PRO MAX"</span><span style="color:#cccccc">,</span></div>
<div style="position:absolute;right:1156.55px;top:1173.04px;font:400 25px/25px 'Liberation Mono', monospace;letter-spacing:-0.550px;color:#6e7681;white-space:pre;-webkit-text-stroke:0.3px currentColor">101</div>
<div style="position:absolute;left:1634.5px;top:1209.04px;font:400 25px/25px 'Liberation Mono', monospace;letter-spacing:-0.550px;white-space:pre;-webkit-text-stroke:0.35px currentColor"><span style="color:#cccccc">      </span><span style="color:#9cdcfe">"quantity"</span><span style="color:#cccccc">: </span><span style="color:#b5cea8">1</span><span style="color:#cccccc">,</span></div>
<div style="position:absolute;right:1156.55px;top:1209.04px;font:400 25px/25px 'Liberation Mono', monospace;letter-spacing:-0.550px;color:#6e7681;white-space:pre;-webkit-text-stroke:0.3px currentColor">102</div>
<div style="position:absolute;left:1634.5px;top:1245.04px;font:400 25px/25px 'Liberation Mono', monospace;letter-spacing:-0.550px;white-space:pre;-webkit-text-stroke:0.35px currentColor"><span style="color:#cccccc">      </span><span style="color:#9cdcfe">"unitPrice"</span><span style="color:#cccccc">: </span><span style="color:#b5cea8">54.00</span><span style="color:#cccccc">,</span></div>
<div style="position:absolute;right:1156.55px;top:1245.04px;font:400 25px/25px 'Liberation Mono', monospace;letter-spacing:-0.550px;color:#6e7681;white-space:pre;-webkit-text-stroke:0.3px currentColor">103</div>
<div style="position:absolute;left:1634.5px;top:1281.04px;font:400 25px/25px 'Liberation Mono', monospace;letter-spacing:-0.550px;white-space:pre;-webkit-text-stroke:0.35px currentColor"><span style="color:#cccccc">      </span><span style="color:#9cdcfe">"total"</span><span style="color:#cccccc">: </span><span style="color:#b5cea8">54.00</span></div>
<div style="position:absolute;right:1156.55px;top:1281.04px;font:400 25px/25px 'Liberation Mono', monospace;letter-spacing:-0.550px;color:#6e7681;white-space:pre;-webkit-text-stroke:0.3px currentColor">104</div>
<div style="position:absolute;left:1634.5px;top:1317.04px;font:400 25px/25px 'Liberation Mono', monospace;letter-spacing:-0.550px;white-space:pre;-webkit-text-stroke:0.35px currentColor"><span style="color:#cccccc">    </span><span style="color:#179fff">}</span></div>
<div style="position:absolute;right:1156.55px;top:1317.04px;font:400 25px/25px 'Liberation Mono', monospace;letter-spacing:-0.550px;color:#6e7681;white-space:pre;-webkit-text-stroke:0.3px currentColor">105</div>
<div style="position:absolute;left:1634.5px;top:1353.04px;font:400 25px/25px 'Liberation Mono', monospace;letter-spacing:-0.550px;white-space:pre;-webkit-text-stroke:0.35px currentColor"><span style="color:#cccccc">  </span><span style="color:#da70d6">]</span><span style="color:#cccccc">,</span></div>
<div style="position:absolute;right:1156.55px;top:1353.04px;font:400 25px/25px 'Liberation Mono', monospace;letter-spacing:-0.550px;color:#6e7681;white-space:pre;-webkit-text-stroke:0.3px currentColor">106</div>
<div style="position:absolute;left:1634.5px;top:1389.04px;font:400 25px/25px 'Liberation Mono', monospace;letter-spacing:-0.550px;white-space:pre;-webkit-text-stroke:0.35px currentColor"><span style="color:#cccccc">  </span><span style="color:#9cdcfe">"subtotal"</span><span style="color:#cccccc">: </span><span style="color:#b5cea8">701.22</span><span style="color:#cccccc">,</span></div>
<div style="position:absolute;right:1156.55px;top:1389.04px;font:400 25px/25px 'Liberation Mono', monospace;letter-spacing:-0.550px;color:#6e7681;white-space:pre;-webkit-text-stroke:0.3px currentColor">107</div>
<div style="position:absolute;left:1634.5px;top:1425.04px;font:400 25px/25px 'Liberation Mono', monospace;letter-spacing:-0.550px;white-space:pre;-webkit-text-stroke:0.35px currentColor"><span style="color:#cccccc">  </span><span style="color:#9cdcfe">"tax"</span><span style="color:#cccccc">: </span><span style="color:#ce9178">"7%"</span><span style="color:#cccccc">,</span></div>
<div style="position:absolute;right:1156.55px;top:1425.04px;font:400 25px/25px 'Liberation Mono', monospace;letter-spacing:-0.550px;color:#cccccc;white-space:pre;-webkit-text-stroke:0.3px currentColor">108</div>
<div style="position:absolute;left:1634.5px;top:1461.04px;font:400 25px/25px 'Liberation Mono', monospace;letter-spacing:-0.550px;white-space:pre;-webkit-text-stroke:0.35px currentColor"><span style="color:#cccccc">  </span><span style="color:#9cdcfe">"total"</span><span style="color:#cccccc">: </span><span style="color:#b5cea8">754.00</span></div>
<div style="position:absolute;right:1156.55px;top:1461.04px;font:400 25px/25px 'Liberation Mono', monospace;letter-spacing:-0.550px;color:#6e7681;white-space:pre;-webkit-text-stroke:0.3px currentColor">109</div>
<div style="position:absolute;left:1634.5px;top:1497.04px;font:400 25px/25px 'Liberation Mono', monospace;letter-spacing:-0.550px;white-space:pre;-webkit-text-stroke:0.35px currentColor"><span style="color:#ffd700">}</span></div>
<div style="position:absolute;right:1156.55px;top:1497.04px;font:400 25px/25px 'Liberation Mono', monospace;letter-spacing:-0.550px;color:#6e7681;white-space:pre;-webkit-text-stroke:0.3px currentColor">110</div>
<div style="position:absolute;left:1634.5px;top:1533.04px;font:400 25px/25px 'Liberation Mono', monospace;letter-spacing:-0.550px;white-space:pre;-webkit-text-stroke:0.35px currentColor"><span style="color:#cccccc">```</span></div>
<div style="position:absolute;right:1156.55px;top:1533.04px;font:400 25px/25px 'Liberation Mono', monospace;letter-spacing:-0.550px;color:#6e7681;white-space:pre;-webkit-text-stroke:0.3px currentColor">111</div>
<div style="position:absolute;right:1156.55px;top:1569.04px;font:400 25px/25px 'Liberation Mono', monospace;letter-spacing:-0.550px;color:#6e7681;white-space:pre;-webkit-text-stroke:0.3px currentColor">112</div>
<div style="position:absolute;left:1502px;top:178px;width:1048px;height:72px;background:#1f1f1f;"></div>
<div style="position:absolute;left:1502px;top:250px;width:1048px;height:5px;background:linear-gradient(#000000cc,#00000000)"></div>
<div style="position:absolute;left:1634.5px;top:186.54px;font:700 25px/25px 'Liberation Mono', monospace;letter-spacing:-0.550px;color:#569cd6;white-space:pre"># Acme Invoice Ltd</div>
<div style="position:absolute;right:1156.55px;top:186.54px;font:400 25px/25px 'Liberation Mono', monospace;letter-spacing:-0.550px;color:#6e7681;white-space:pre">29</div>
<div style="position:absolute;left:1634.5px;top:222.54px;font:700 25px/25px 'Liberation Mono', monospace;letter-spacing:-0.550px;color:#569cd6;white-space:pre">## Subject</div>
<div style="position:absolute;right:1156.55px;top:222.54px;font:400 25px/25px 'Liberation Mono', monospace;letter-spacing:-0.550px;color:#6e7681;white-space:pre">35</div>
<div style="position:absolute;left:1686px;top:178px;width:835px;height:65px;background:#202020;border-radius:0 0 10px 10px;box-shadow:0 2px 8px #000000aa;border-bottom:1px solid #303030"></div>
<div style="position:absolute;left:1686px;top:178px;width:3.5px;height:64px;background:#454545;border-radius:0 0 0 6px"></div>
<div style="position:absolute;left:1728px;top:184.5px;width:439px;height:46px;background:#2d2d2d;border:1px solid #3a3a3a;border-radius:6px"></div>
<div style="position:absolute;left:1742.00px;top:195.57px;font:400 26.5px/26.5px 'Liberation Sans', sans-serif;color:#cccccc;white-space:pre;-webkit-text-stroke:0.3px currentColor;">image</div>
<div style="position:absolute;left:2046.00px;top:197.38px;font:400 22px/22px 'Liberation Sans', sans-serif;color:#c5c5c5;white-space:pre;">Aa</div>
<div style="position:absolute;left:2181.00px;top:197.57px;font:400 26.5px/26.5px 'Liberation Sans', sans-serif;color:#cccccc;white-space:pre;-webkit-text-stroke:0.3px currentColor;">3 of 3</div>
<svg style="position:absolute;left:1686px;top:178px" width="835" height="66" viewBox="1686 178 835 66" fill="none" stroke="#cccccc" stroke-width="2" stroke-linecap="round" stroke-linejoin="round">
<path d="M1706 200 L1716 210 L1706 220"/>
<path d="M2087 215 V219 H2117 V215" stroke="#c5c5c5"/>
<rect x="2135" y="212" width="7" height="7" fill="#c5c5c5" stroke="none"/>
<path d="M2152 198 V212 M2145 201 L2159 209 M2159 201 L2145 209" stroke="#c5c5c5"/>
<path d="M2343.2 198 V220 M2334 207 L2343.2 197.5 L2352.5 207"/>
<path d="M2393.2 198 V220 M2384 211 L2393.2 220.5 L2402.5 211"/>
<path d="M2428.5 201.5 H2455 M2428.5 210 H2455 M2428.5 218.5 H2446"/>
<path d="M2482 201.5 L2498 217.5 M2498 201.5 L2482 217.5"/>
</svg>
<div style="position:absolute;left:2086.50px;top:196.07px;font:400 20px/20px 'Liberation Sans', sans-serif;color:#c5c5c5;white-space:pre;">ab</div>
<div style="position:absolute;left:2557px;top:269.5px;width:137px;height:4px;background:#4a4a4a;"></div>
<div style="position:absolute;left:2557px;top:397.5px;width:137px;height:4px;background:#4a4a4a;"></div>
<div style="position:absolute;left:2557px;top:285.5px;width:137px;height:4px;background:#b07a2c;"></div>
<div style="position:absolute;left:2557px;top:417.5px;width:137px;height:4px;background:#b07a2c;"></div>
<div style="position:absolute;left:2567px;top:285.5px;width:10px;height:4px;background:#e39a3a;"></div>
<div style="position:absolute;left:2588px;top:285.5px;width:10px;height:4px;background:#e39a3a;"></div>
<div style="position:absolute;left:2587px;top:417.5px;width:11px;height:4px;background:#e39a3a;"></div>
<svg style="position:absolute;left:0;top:0" width="2738" height="1744"><path fill="#569cd6" fill-opacity="0.6" d="M2557.8 178.5h2v2.0h-2zM2561.8 178.5h8v2.0h-8zM2571.8 178.5h14v2.0h-14zM2587.8 178.5h6v2.0h-6zM2557.8 198.5h4v2.0h-4zM2563.8 198.5h14v2.0h-14zM2557.8 302.5h2v2.0h-2zM2561.8 302.5h8v2.0h-8zM2571.8 302.5h14v2.0h-14zM2587.8 302.5h6v2.0h-6zM2557.8 326.5h4v2.0h-4zM2563.8 326.5h14v2.0h-14zM2557.8 410.5h18v2.0h-18zM2585.8 522.5h8v2.0h-8zM2575.8 526.5h8v2.0h-8zM2579.8 530.5h8v2.0h-8z"/><path fill="#cccccc" fill-opacity="0.6" d="M2557.8 186.5h14v2.0h-14zM2573.8 186.5h6v2.0h-6zM2585.8 186.5h8v2.0h-8zM2595.8 186.5h6v2.0h-6zM2603.8 186.5h8v2.0h-8zM2613.8 186.5h16v2.0h-16zM2631.8 186.5h6v2.0h-6zM2639.8 186.5h12v2.0h-12zM2653.8 186.5h8v2.0h-8zM2663.8 186.5h2v2.0h-2zM2667.8 186.5h6v2.0h-6zM2557.8 190.5h16v2.0h-16zM2575.8 190.5h4v2.0h-4zM2557.8 206.5h8v2.0h-8zM2567.8 206.5h8v2.0h-8zM2577.8 206.5h14v2.0h-14zM2593.8 206.5h6v2.0h-6zM2601.8 206.5h12v2.0h-12zM2615.8 206.5h12v2.0h-12zM2629.8 206.5h2v2.0h-2zM2633.8 206.5h4v2.0h-4zM2639.8 206.5h6v2.0h-6zM2647.8 206.5h18v2.0h-18zM2667.8 206.5h12v2.0h-12zM2557.8 210.5h14v2.0h-14zM2573.8 210.5h4v2.0h-4zM2557.8 214.5h26v2.0h-26zM2585.8 214.5h20v2.0h-20zM2607.8 214.5h10v2.0h-10zM2619.8 214.5h8v2.0h-8zM2629.8 214.5h4v2.0h-4zM2635.8 214.5h12v2.0h-12zM2649.8 214.5h20v2.0h-20zM2671.8 214.5h6v2.0h-6zM2557.8 218.5h8v2.0h-8zM2561.8 226.5h12v2.0h-12zM2561.8 234.5h16v2.0h-16zM2561.8 238.5h22v2.0h-22zM2611.8 238.5h8v2.0h-8zM2621.8 238.5h10v2.0h-10zM2561.8 242.5h2v2.0h-2zM2611.8 242.5h12v2.0h-12zM2633.8 242.5h12v2.0h-12zM2561.8 246.5h12v2.0h-12zM2575.8 246.5h4v2.0h-4zM2581.8 246.5h6v2.0h-6zM2589.8 246.5h6v2.0h-6zM2611.8 246.5h2v2.0h-2zM2633.8 246.5h10v2.0h-10zM2651.8 246.5h10v2.0h-10zM2561.8 250.5h10v2.0h-10zM2573.8 250.5h10v2.0h-10zM2611.8 250.5h8v2.0h-8zM2561.8 254.5h8v2.0h-8zM2561.8 258.5h8v2.0h-8zM2561.8 262.5h8v2.0h-8zM2561.8 266.5h12v2.0h-12zM2561.8 270.5h16v2.0h-16zM2611.8 270.5h4v2.0h-4zM2561.8 274.5h16v2.0h-16zM2579.8 274.5h10v2.0h-10zM2591.8 274.5h2v2.0h-2zM2595.8 274.5h8v2.0h-8zM2611.8 274.5h12v2.0h-12zM2561.8 278.5h12v2.0h-12zM2575.8 278.5h6v2.0h-6zM2557.8 294.5h18v2.0h-18zM2577.8 294.5h4v2.0h-4zM2583.8 294.5h6v2.0h-6zM2591.8 294.5h18v2.0h-18zM2611.8 294.5h10v2.0h-10zM2557.8 310.5h14v2.0h-14zM2573.8 310.5h6v2.0h-6zM2585.8 310.5h8v2.0h-8zM2595.8 310.5h6v2.0h-6zM2603.8 310.5h20v2.0h-20zM2557.8 314.5h8v2.0h-8zM2567.8 314.5h16v2.0h-16zM2585.8 314.5h6v2.0h-6zM2593.8 314.5h12v2.0h-12zM2607.8 314.5h8v2.0h-8zM2617.8 314.5h2v2.0h-2zM2557.8 318.5h6v2.0h-6zM2565.8 318.5h16v2.0h-16zM2583.8 318.5h4v2.0h-4zM2557.8 334.5h8v2.0h-8zM2567.8 334.5h8v2.0h-8zM2577.8 334.5h14v2.0h-14zM2593.8 334.5h6v2.0h-6zM2601.8 334.5h12v2.0h-12zM2615.8 334.5h12v2.0h-12zM2629.8 334.5h2v2.0h-2zM2633.8 334.5h4v2.0h-4zM2639.8 334.5h6v2.0h-6zM2647.8 334.5h18v2.0h-18zM2667.8 334.5h12v2.0h-12zM2557.8 338.5h14v2.0h-14zM2573.8 338.5h4v2.0h-4zM2579.8 338.5h26v2.0h-26zM2607.8 338.5h20v2.0h-20zM2629.8 338.5h10v2.0h-10zM2641.8 338.5h8v2.0h-8zM2651.8 338.5h4v2.0h-4zM2657.8 338.5h12v2.0h-12zM2671.8 338.5h12v2.0h-12zM2557.8 342.5h8v2.0h-8zM2567.8 342.5h6v2.0h-6zM2575.8 342.5h8v2.0h-8zM2561.8 350.5h12v2.0h-12zM2561.8 358.5h16v2.0h-16zM2561.8 362.5h22v2.0h-22zM2611.8 362.5h8v2.0h-8zM2621.8 362.5h10v2.0h-10zM2561.8 366.5h2v2.0h-2zM2611.8 366.5h12v2.0h-12zM2633.8 366.5h12v2.0h-12zM2561.8 370.5h12v2.0h-12zM2575.8 370.5h4v2.0h-4zM2581.8 370.5h6v2.0h-6zM2589.8 370.5h6v2.0h-6zM2611.8 370.5h2v2.0h-2zM2633.8 370.5h10v2.0h-10zM2651.8 370.5h10v2.0h-10zM2561.8 374.5h10v2.0h-10zM2573.8 374.5h10v2.0h-10zM2611.8 374.5h8v2.0h-8zM2561.8 378.5h8v2.0h-8zM2561.8 382.5h8v2.0h-8zM2561.8 386.5h8v2.0h-8zM2561.8 390.5h12v2.0h-12zM2561.8 394.5h16v2.0h-16zM2611.8 394.5h4v2.0h-4zM2561.8 398.5h16v2.0h-16zM2579.8 398.5h8v2.0h-8zM2611.8 398.5h12v2.0h-12zM2561.8 402.5h12v2.0h-12zM2575.8 402.5h6v2.0h-6zM2557.8 422.5h16v2.0h-16zM2575.8 422.5h4v2.0h-4zM2581.8 422.5h6v2.0h-6zM2589.8 422.5h14v2.0h-14zM2605.8 422.5h10v2.0h-10zM2557.8 430.5h8v2.0h-8zM2567.8 430.5h4v2.0h-4zM2573.8 430.5h6v2.0h-6zM2581.8 430.5h18v2.0h-18zM2601.8 430.5h8v2.0h-8zM2611.8 430.5h8v2.0h-8zM2621.8 430.5h16v2.0h-16zM2639.8 430.5h12v2.0h-12zM2653.8 430.5h12v2.0h-12zM2557.8 438.5h8v2.0h-8zM2567.8 438.5h2v2.0h-2zM2571.8 438.5h8v2.0h-8zM2581.8 438.5h14v2.0h-14zM2597.8 438.5h8v2.0h-8zM2607.8 438.5h8v2.0h-8zM2617.8 438.5h4v2.0h-4zM2623.8 438.5h8v2.0h-8zM2633.8 438.5h18v2.0h-18zM2653.8 438.5h4v2.0h-4zM2659.8 438.5h6v2.0h-6zM2557.8 442.5h16v2.0h-16zM2575.8 442.5h14v2.0h-14zM2557.8 450.5h14v2.0h-14zM2591.8 458.5h2v2.0h-2zM2625.8 458.5h2v2.0h-2zM2573.8 462.5h2v2.0h-2zM2601.8 462.5h2v2.0h-2zM2579.8 466.5h2v2.0h-2zM2607.8 466.5h2v2.0h-2zM2577.8 470.5h2v2.0h-2zM2589.8 474.5h2v2.0h-2zM2617.8 474.5h2v2.0h-2zM2595.8 478.5h2v2.0h-2zM2575.8 490.5h2v2.0h-2zM2595.8 498.5h2v2.0h-2zM2637.8 498.5h2v2.0h-2zM2589.8 502.5h2v2.0h-2zM2595.8 502.5h2v2.0h-2zM2591.8 506.5h2v2.0h-2zM2605.8 506.5h2v2.0h-2zM2583.8 510.5h2v2.0h-2zM2581.8 522.5h2v2.0h-2zM2593.8 522.5h2v2.0h-2zM2571.8 526.5h2v2.0h-2zM2583.8 526.5h2v2.0h-2zM2575.8 530.5h2v2.0h-2zM2557.8 538.5h6v2.0h-6zM2557.8 546.5h16v2.0h-16zM2575.8 546.5h2v2.0h-2zM2579.8 546.5h14v2.0h-14zM2595.8 546.5h8v2.0h-8zM2605.8 546.5h10v2.0h-10zM2617.8 546.5h6v2.0h-6zM2625.8 546.5h14v2.0h-14zM2641.8 546.5h12v2.0h-12zM2655.8 546.5h4v2.0h-4zM2661.8 546.5h6v2.0h-6zM2557.8 550.5h16v2.0h-16zM2575.8 550.5h8v2.0h-8zM2585.8 550.5h12v2.0h-12zM2599.8 550.5h18v2.0h-18zM2619.8 550.5h8v2.0h-8zM2629.8 550.5h14v2.0h-14zM2645.8 550.5h10v2.0h-10zM2657.8 550.5h10v2.0h-10zM2669.8 550.5h4v2.0h-4zM2675.8 550.5h4v2.0h-4zM2557.8 554.5h10v2.0h-10zM2569.8 554.5h20v2.0h-20zM2591.8 554.5h4v2.0h-4zM2597.8 554.5h6v2.0h-6zM2605.8 554.5h16v2.0h-16zM2623.8 554.5h10v2.0h-10zM2635.8 554.5h4v2.0h-4zM2641.8 554.5h10v2.0h-10zM2653.8 554.5h14v2.0h-14zM2669.8 554.5h4v2.0h-4zM2557.8 558.5h8v2.0h-8zM2567.8 558.5h22v2.0h-22zM2591.8 558.5h12v2.0h-12zM2605.8 558.5h18v2.0h-18zM2625.8 558.5h4v2.0h-4zM2631.8 558.5h6v2.0h-6zM2639.8 558.5h16v2.0h-16zM2657.8 558.5h12v2.0h-12zM2671.8 558.5h6v2.0h-6zM2557.8 562.5h6v2.0h-6zM2565.8 562.5h20v2.0h-20zM2587.8 562.5h12v2.0h-12zM2601.8 562.5h6v2.0h-6zM2609.8 562.5h4v2.0h-4zM2615.8 562.5h8v2.0h-8zM2625.8 562.5h6v2.0h-6zM2633.8 562.5h8v2.0h-8zM2643.8 562.5h4v2.0h-4zM2649.8 562.5h10v2.0h-10zM2661.8 562.5h4v2.0h-4zM2667.8 562.5h12v2.0h-12zM2557.8 566.5h16v2.0h-16zM2557.8 574.5h8v2.0h-8zM2567.8 574.5h4v2.0h-4zM2573.8 574.5h2v2.0h-2zM2577.8 574.5h8v2.0h-8zM2587.8 574.5h16v2.0h-16zM2605.8 574.5h8v2.0h-8zM2615.8 574.5h28v2.0h-28zM2645.8 574.5h10v2.0h-10zM2657.8 574.5h4v2.0h-4zM2663.8 574.5h6v2.0h-6zM2671.8 574.5h10v2.0h-10zM2557.8 578.5h10v2.0h-10zM2557.8 586.5h14v2.0h-14zM2591.8 594.5h2v2.0h-2zM2625.8 594.5h2v2.0h-2zM2573.8 598.5h2v2.0h-2zM2601.8 598.5h2v2.0h-2zM2579.8 602.5h2v2.0h-2zM2607.8 602.5h2v2.0h-2zM2577.8 606.5h2v2.0h-2zM2589.8 610.5h2v2.0h-2zM2617.8 610.5h2v2.0h-2zM2595.8 614.5h2v2.0h-2zM2575.8 626.5h2v2.0h-2zM2595.8 634.5h2v2.0h-2zM2637.8 634.5h2v2.0h-2zM2589.8 638.5h2v2.0h-2zM2595.8 638.5h2v2.0h-2zM2591.8 642.5h2v2.0h-2zM2605.8 642.5h2v2.0h-2zM2583.8 646.5h2v2.0h-2zM2581.8 658.5h2v2.0h-2zM2597.8 658.5h2v2.0h-2zM2571.8 662.5h2v2.0h-2zM2583.8 662.5h2v2.0h-2zM2575.8 666.5h2v2.0h-2zM2557.8 674.5h6v2.0h-6z"/><path fill="#1f1f1f" fill-opacity="0.6" d="M2557.8 286.5h54v2.0h-54zM2557.8 418.5h4v2.0h-4zM2563.8 418.5h14v2.0h-14zM2579.8 418.5h6v2.0h-6zM2587.8 418.5h10v2.0h-10zM2599.8 418.5h18v2.0h-18zM2619.8 418.5h6v2.0h-6zM2627.8 418.5h10v2.0h-10zM2639.8 418.5h4v2.0h-4zM2645.8 418.5h8v2.0h-8zM2655.8 418.5h6v2.0h-6zM2663.8 418.5h6v2.0h-6z"/><path fill="#ffd700" fill-opacity="0.6" d="M2557.8 454.5h2v2.0h-2zM2557.8 534.5h2v2.0h-2zM2557.8 590.5h2v2.0h-2zM2557.8 670.5h2v2.0h-2z"/><path fill="#9cdcfe" fill-opacity="0.6" d="M2561.8 458.5h30v2.0h-30zM2561.8 462.5h12v2.0h-12zM2561.8 466.5h18v2.0h-18zM2561.8 470.5h16v2.0h-16zM2565.8 474.5h24v2.0h-24zM2565.8 478.5h30v2.0h-30zM2561.8 490.5h14v2.0h-14zM2569.8 498.5h26v2.0h-26zM2569.8 502.5h20v2.0h-20zM2569.8 506.5h22v2.0h-22zM2569.8 510.5h14v2.0h-14zM2561.8 522.5h20v2.0h-20zM2561.8 526.5h10v2.0h-10zM2561.8 530.5h14v2.0h-14zM2561.8 594.5h30v2.0h-30zM2561.8 598.5h12v2.0h-12zM2561.8 602.5h18v2.0h-18zM2561.8 606.5h16v2.0h-16zM2565.8 610.5h24v2.0h-24zM2565.8 614.5h30v2.0h-30zM2561.8 626.5h14v2.0h-14zM2569.8 634.5h26v2.0h-26zM2569.8 638.5h20v2.0h-20zM2569.8 642.5h22v2.0h-22zM2569.8 646.5h14v2.0h-14zM2561.8 658.5h20v2.0h-20zM2561.8 662.5h10v2.0h-10zM2561.8 666.5h14v2.0h-14z"/><path fill="#ce9178" fill-opacity="0.6" d="M2595.8 458.5h30v2.0h-30zM2577.8 462.5h24v2.0h-24zM2583.8 466.5h24v2.0h-24zM2593.8 474.5h24v2.0h-24zM2599.8 478.5h10v2.0h-10zM2611.8 478.5h16v2.0h-16zM2629.8 478.5h6v2.0h-6zM2637.8 478.5h12v2.0h-12zM2651.8 478.5h8v2.0h-8zM2661.8 478.5h4v2.0h-4zM2667.8 478.5h6v2.0h-6zM2565.8 482.5h16v2.0h-16zM2583.8 482.5h6v2.0h-6zM2599.8 498.5h14v2.0h-14zM2615.8 498.5h4v2.0h-4zM2621.8 498.5h6v2.0h-6zM2629.8 498.5h8v2.0h-8zM2595.8 594.5h30v2.0h-30zM2577.8 598.5h24v2.0h-24zM2583.8 602.5h24v2.0h-24zM2593.8 610.5h24v2.0h-24zM2599.8 614.5h10v2.0h-10zM2611.8 614.5h16v2.0h-16zM2629.8 614.5h6v2.0h-6zM2637.8 614.5h12v2.0h-12zM2651.8 614.5h8v2.0h-8zM2661.8 614.5h4v2.0h-4zM2667.8 614.5h6v2.0h-6zM2565.8 618.5h16v2.0h-16zM2583.8 618.5h6v2.0h-6zM2599.8 634.5h14v2.0h-14zM2615.8 634.5h4v2.0h-4zM2621.8 634.5h6v2.0h-6zM2629.8 634.5h8v2.0h-8zM2575.8 662.5h8v2.0h-8z"/><path fill="#da70d6" fill-opacity="0.6" d="M2581.8 470.5h2v2.0h-2zM2561.8 486.5h4v2.0h-4zM2579.8 490.5h2v2.0h-2zM2561.8 518.5h4v2.0h-4zM2581.8 606.5h2v2.0h-2zM2561.8 622.5h4v2.0h-4zM2579.8 626.5h2v2.0h-2zM2561.8 654.5h4v2.0h-4z"/><path fill="#179fff" fill-opacity="0.6" d="M2565.8 494.5h2v2.0h-2zM2565.8 514.5h2v2.0h-2zM2565.8 630.5h2v2.0h-2zM2565.8 650.5h2v2.0h-2z"/><path fill="#b5cea8" fill-opacity="0.6" d="M2593.8 502.5h2v2.0h-2zM2595.8 506.5h10v2.0h-10zM2587.8 510.5h10v2.0h-10zM2593.8 638.5h2v2.0h-2zM2595.8 642.5h10v2.0h-10zM2587.8 646.5h10v2.0h-10zM2585.8 658.5h12v2.0h-12zM2579.8 666.5h12v2.0h-12z"/></svg>
<div style="position:absolute;left:2558px;top:225.5px;width:1.6px;height:56px;background:#5a5a5a;"></div>
<div style="position:absolute;left:2606.5px;top:225.5px;width:1.6px;height:56px;background:#5a5a5a;"></div>
<div style="position:absolute;left:2633px;top:225.5px;width:1.6px;height:56px;background:#5a5a5a;"></div>
<div style="position:absolute;left:2651px;top:225.5px;width:1.6px;height:56px;background:#5a5a5a;"></div>
<div style="position:absolute;left:2667px;top:225.5px;width:1.6px;height:56px;background:#5a5a5a;"></div>
<div style="position:absolute;left:2560px;top:231.0px;width:107px;height:1.5px;background:#5a5a5a;"></div>
<div style="position:absolute;left:2558px;top:349.5px;width:1.6px;height:56px;background:#5a5a5a;"></div>
<div style="position:absolute;left:2606.5px;top:349.5px;width:1.6px;height:56px;background:#5a5a5a;"></div>
<div style="position:absolute;left:2633px;top:349.5px;width:1.6px;height:56px;background:#5a5a5a;"></div>
<div style="position:absolute;left:2651px;top:349.5px;width:1.6px;height:56px;background:#5a5a5a;"></div>
<div style="position:absolute;left:2667px;top:349.5px;width:1.6px;height:56px;background:#5a5a5a;"></div>
<div style="position:absolute;left:2560px;top:355.0px;width:107px;height:1.5px;background:#5a5a5a;"></div>
<div style="position:absolute;left:2704px;top:399px;width:9px;height:12px;background:#9a9a9a;"></div>
<div style="position:absolute;left:2704px;top:435px;width:9px;height:12px;background:#a8782e;"></div>
<div style="position:absolute;left:2695px;top:1281px;width:26px;height:3px;background:#8a8a8a;"></div>
<div style="position:absolute;left:2703px;top:1281px;width:10px;height:12px;background:#8a8a8a;"></div>
<div style="position:absolute;left:2703px;top:687px;width:10px;height:12px;background:#8a8a8a;"></div>
<div style="position:absolute;left:2704px;top:733px;width:9px;height:11px;background:#a8782e;"></div>
<svg style="position:absolute;left:1406px;top:63px" width="95" height="1638" viewBox="1406 63 95 1638" fill="none" stroke="#868686" stroke-width="2.6" stroke-linecap="round" stroke-linejoin="round">
<path d="M1444 101 H1434.5 Q1433 101 1433 102.5 V133 Q1433 134.5 1434.5 134.5 H1456"/>
<path d="M1445 89.5 Q1445 88 1446.5 88 H1463 L1473 98 V121 Q1473 122.5 1471.5 122.5 H1446.5 Q1445 122.5 1445 121 Z M1463 88 V98 H1473"/>
<circle cx="1461" cy="199" r="14.5"/><path d="M1450.8 209.5 L1433.5 229.5"/>
<circle cx="1443.6" cy="287" r="5.5"/><circle cx="1464.5" cy="296.6" r="5.5"/><circle cx="1443.6" cy="320.5" r="5.5"/>
<path d="M1443.6 292.5 V315 M1443.6 313 Q1444 306 1452 305 Q1463 304 1464.5 302"/>
<path d="M1446 382 L1477 402 L1451 418"/>
<path d="M1434 412 Q1434 401 1442.5 401 Q1451 401 1451 412 Q1451 424 1442.5 424 Q1434 424 1434 412 Z M1437 403 Q1442.5 398 1448 403 M1434 413 H1429.5 M1451 413 H1455 M1435 406 L1430 402 M1450 406 L1455 402 M1435 419 L1430 423 M1450 419 L1455 423"/>
<path d="M1472 498 V479.5 Q1472 477 1469.5 477 H1434.5 Q1432 477 1432 479.5 V507 Q1432 509.5 1434.5 509.5 H1455 M1441 515.5 H1455 M1447 509.5 V515.5"/>
<circle cx="1465.6" cy="506.8" r="11.5"/>
<path d="M1460 503 L1464 507 L1460 511 M1471 500.5 L1467 504.5 L1471 508.5" stroke-width="2"/>
<path d="M1431 570 H1448 V614 H1431 Z M1431 592 H1470 V614 H1448 M1454 571 Q1454 568 1457 568 H1475 Q1478 568 1478 571 V587 Q1478 590 1475 590 H1457 Q1454 590 1454 587 Z"/>
<path d="M1441 668 H1467 M1445 668 V683 L1436.5 707 Q1436 709 1438 709 H1470 Q1472 709 1471.5 707 L1463 683 V668 M1442 693 H1466"/>
<path d="M1434 858 H1469 Q1472 858 1472 861 V876 M1434 858 Q1432 858 1432 861 V884 Q1432 887 1435 887 H1440 V895 L1446 887 H1446 M1452 878 H1472 Q1475 878 1475 881 V893 Q1475 896 1472 896 H1469 V902 L1463 896 H1455 Q1452 896 1452 893 Z" />
<circle cx="1453.9" cy="1556" r="22"/><circle cx="1453.9" cy="1551.7" r="10"/>
<path d="M1440.3 1572 Q1444 1561.5 1453.9 1561.5 Q1464 1561.5 1467.5 1572"/>
<path stroke-width="3" d="M1449.5 1628.5 H1458.5 L1460 1636.5 L1466.5 1632.5 L1473 1639.0 L1469 1645.5 L1477 1647.0 V1654 L1469 1657.5 L1473 1664.0 L1466.5 1670.5 L1460 1666.5 L1458.5 1674.5 H1449.5 L1448 1666.5 L1441.5 1670.5 L1435 1664.0 L1439 1657.5 L1431 1656.0 V1645 L1439 1645.5 L1435 1639.0 L1441.5 1632.5 L1448 1636.5 Z"/>
<circle cx="1453.9" cy="1649.5" r="5.2"/>
</svg>
<svg style="position:absolute;left:1406px;top:740px" width="95" height="80" viewBox="1406 740 95 80" fill="#868686">
<path d="M1430 787.5 H1467 Q1470 781 1475.5 783 Q1479 785 1478.5 787.5 Q1474 789.5 1471 790 Q1465 803 1448 803 Q1432 803 1430 787.5 Z"/>
<rect x="1433.5" y="781" width="5" height="5"/><rect x="1440" y="781" width="5" height="5"/><rect x="1446.5" y="781" width="5" height="5"/><rect x="1453" y="781" width="5" height="5"/><rect x="1459.5" y="781" width="5" height="5"/>
<rect x="1440" y="774.5" width="5" height="5"/><rect x="1446.5" y="774.5" width="5" height="5"/><rect x="1453" y="774.5" width="5" height="5"/>
<rect x="1453" y="768" width="5" height="5"/>
</svg>
<div style="position:absolute;left:1453.8px;top:111.8px;width:32px;height:32px;border-radius:50%;background:#2f7bd3;color:#fff;font:700 19px/32px 'Liberation Sans', sans-serif;text-align:center">2</div>
<div style="position:absolute;left:1453.8px;top:304px;width:32px;height:32px;border-radius:50%;background:#2f7bd3;color:#fff;font:700 19px/32px 'Liberation Sans', sans-serif;text-align:center">7</div>
<div style="position:absolute;left:1453.8px;top:592.3px;width:32px;height:32px;border-radius:50%;background:#2f7bd3;color:#fff;font:700 19px/32px 'Liberation Sans', sans-serif;text-align:center">3</div>
<div style="position:absolute;left:1454px;top:1652px;width:32px;height:32px;border-radius:50%;background:#2f7bd3;color:#fff;font:700 19px/32px 'Liberation Sans', sans-serif;text-align:center">1</div>
<svg style="position:absolute;left:1406px;top:1660px" width="1315" height="84" viewBox="1406 1660 1315 84" fill="none" stroke="#cccccc" stroke-width="1.9" stroke-linecap="round" stroke-linejoin="round"><path d="M1431.8 1717.5 L1439.5 1724.8 L1431.8 1732.6 M1447.8 1710.2 L1440.5 1717.5 L1447.8 1725.3" stroke="#ffffff" stroke-width="2" stroke-linecap="butt"/><g transform="translate(0 0)"><circle cx="1494" cy="1712.5" r="3.9"/><circle cx="1494" cy="1731.5" r="3.9"/><circle cx="1506" cy="1717.5" r="3.9"/><path d="M1494 1716.4 V1727.6 M1494 1726 Q1494 1723 1499 1722.8 Q1505.5 1722.5 1506 1721.4"/></g><g transform="translate(0 0)"><path d="M1602 1722 A10 10 0 0 1 1622 1721 M1617.5 1717 L1622 1721.5 L1626.5 1717 M1622 1724 A10 10 0 0 1 1602 1725 M1597.5 1728 L1602 1723.5 L1606.5 1728"/><circle cx="1667.9" cy="1722" r="11.3"/><path d="M1663.1 1717.2 L1673.1 1727.2 M1673.1 1717.2 L1663.1 1727.2"/><path d="M1724.6 1710.5 L1736.6 1732 H1712.8 Z M1724.6 1719 V1725 M1724.6 1728 V1728.6" stroke-width="1.7"/><circle cx="1807.4" cy="1718" r="2.2"/><path d="M1806 1720.5 L1800.5 1733.5 M1809 1720.5 L1814.5 1733.5 M1803 1727.5 H1812 M1802.5 1712 Q1797.5 1718 1802.5 1724 M1812.5 1712 Q1817.5 1718 1812.5 1724 M1798 1709.5 Q1790.5 1718 1798 1726.5 M1817 1709.5 Q1824.5 1718 1817 1726.5" stroke-width="1.7"/></g><path d="M2608 1723 C2603 1727 2604.5 1735.5 2618 1735.5 C2631.5 1735.5 2633 1727 2628.5 1723 M2609.5 1722 V1730 M2626.5 1723 V1727"/><rect x="2619.5" y="1712" width="9.5" height="9" rx="4"/><path d="M2609.5 1719 Q2608 1711.5 2614.5 1711.5 Q2619 1711.5 2620 1714"/><path d="M2603 1713.5 L2633 1736" stroke="#181818" stroke-width="4.5"/><path d="M2604.5 1714.5 L2631.5 1735"/><path d="M2675.3 1731 A2.5 2.5 0 0 0 2680.3 1731 M2668 1729.5 H2687.6 L2685.5 1725 Q2685.3 1723 2685.5 1719 Q2685.5 1710.5 2677.8 1710.5 Q2670 1710.5 2670 1719 Q2670.3 1723 2670 1725 Z"/></svg>
<div style="position:absolute;left:1521.00px;top:1709.58px;font:400 25.3px/25.3px 'Liberation Sans', sans-serif;color:#cccccc;white-space:pre;-webkit-text-stroke:0.3px currentColor;">main*</div>
<div style="position:absolute;left:1689.50px;top:1709.58px;font:400 25.3px/25.3px 'Liberation Sans', sans-serif;color:#cccccc;white-space:pre;-webkit-text-stroke:0.3px currentColor;">0</div>
<div style="position:absolute;left:1746.00px;top:1709.58px;font:400 25.3px/25.3px 'Liberation Sans', sans-serif;color:#cccccc;white-space:pre;-webkit-text-stroke:0.3px currentColor;">0</div>
<div style="position:absolute;left:1828.00px;top:1709.58px;font:400 25.3px/25.3px 'Liberation Sans', sans-serif;color:#cccccc;white-space:pre;-webkit-text-stroke:0.3px currentColor;">0</div>
<div style="position:absolute;left:1961.00px;top:1710.08px;font:400 25.3px/25.3px 'Liberation Sans', sans-serif;color:#cccccc;white-space:pre;-webkit-text-stroke:0.3px currentColor;">Ln 108, Col 11</div>
<div style="position:absolute;left:2161.00px;top:1710.08px;font:400 25.3px/25.3px 'Liberation Sans', sans-serif;color:#cccccc;white-space:pre;-webkit-text-stroke:0.3px currentColor;">Spaces: 2</div>
<div style="position:absolute;left:2305.00px;top:1710.08px;font:400 25.3px/25.3px 'Liberation Sans', sans-serif;color:#cccccc;white-space:pre;-webkit-text-stroke:0.3px currentColor;">UTF-8</div>
<div style="position:absolute;left:2409.70px;top:1710.08px;font:400 25.3px/25.3px 'Liberation Sans', sans-serif;color:#cccccc;white-space:pre;-webkit-text-stroke:0.3px currentColor;">LF</div>
<div style="position:absolute;left:2459.50px;top:1710.08px;font:400 25.3px/25.3px 'Liberation Sans', sans-serif;color:#cccccc;white-space:pre;-webkit-text-stroke:0.3px currentColor;">Markdown</div>
</body></html>
